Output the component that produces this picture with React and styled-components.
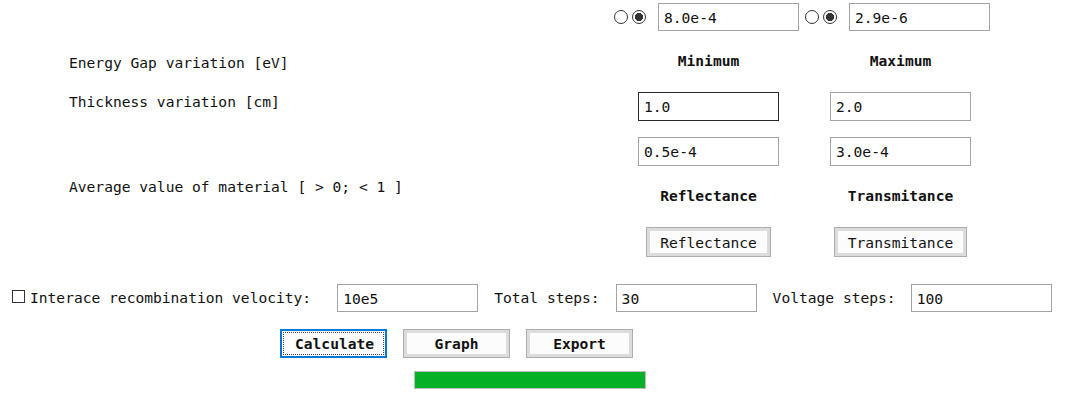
import React from "react";
import styled, { createGlobalStyle } from "styled-components";

const FONT = `"DejaVu Sans Mono", "Liberation Mono", monospace`;

const Global = createGlobalStyle`
  html, body { margin: 0; padding: 0; background: #ffffff; }
  body { font-family: ${FONT}; font-size: 14.6px; color: #000; }
`;

const Page = styled.div`
  width: 1082px;
  height: 412px;
  overflow: hidden;
  background: #ffffff;
  font-family: ${FONT};
  font-size: 14.6px;
  line-height: 17px;
  color: #111;
`;

const TopRow = styled.div`
  display: flex;
  align-items: center;
  gap: 6px;
  height: 28px;
  padding: 3px 0 0 614px;
`;

const RadioGroup = styled.div`
  display: flex;
  align-items: center;
`;

const Radio = styled.span`
  box-sizing: border-box;
  width: 14px;
  height: 14px;
  border-radius: 50%;
  border: 1px solid #333;
  margin-right: ${(p) => p.$gap}px;
  background: ${(p) =>
    p.$checked
      ? "radial-gradient(circle, #333 0 3.8px, #ffffff 4.4px)"
      : "#ffffff"};
`;

const TextBox = styled.input`
  box-sizing: border-box;
  width: 141px;
  height: ${(p) => p.$h || 28}px;
  margin: 0 0 0 ${(p) => p.$ml || 0}px;
  padding: 0 5px;
  border: 1px solid ${(p) => (p.$focused ? "#2b2b2b" : "#a3a3a3")};
  background: #ffffff;
  font-family: ${FONT};
  font-size: 14.6px;
  color: #111;
  outline: none;
  border-radius: 0;
`;

const ParamGrid = styled.div`
  display: grid;
  grid-template-columns: 638px 141px 51px 141px;
  grid-template-rows: 61px 45px 29px 61px 30px;
`;

const RowLabel = styled.div`
  grid-column: 1;
  grid-row: ${(p) => p.$row};
  align-self: start;
  margin-top: ${(p) => p.$top}px;
  padding-left: 69px;
  white-space: pre;
`;

const ColHeader = styled.div`
  grid-column: ${(p) => p.$col};
  grid-row: ${(p) => p.$row};
  align-self: start;
  margin-top: ${(p) => p.$top}px;
  text-align: center;
  font-weight: bold;
  white-space: pre;
`;

const GridCell = styled.div`
  grid-column: ${(p) => p.$col};
  grid-row: ${(p) => p.$row};
  align-self: start;
  display: flex;
  justify-content: ${(p) => (p.$center ? "center" : "flex-start")};
`;

const WinButton = styled.button`
  box-sizing: border-box;
  height: ${(p) => p.$h || 30}px;
  width: ${(p) => (p.$w ? `${p.$w}px` : "auto")};
  padding: 0 13px;
  margin: 0;
  border: 1px solid #adadad;
  box-shadow: inset 0 0 0 3px #dcdcdc;
  background: #fcfcfc;
  font-family: ${FONT};
  font-size: 14.6px;
  font-weight: ${(p) => (p.$bold ? "bold" : "normal")};
  color: #111;
  border-radius: 0;
  cursor: default;
`;

const FocusButton = styled(WinButton)`
  border: 2px solid #0078d7;
  box-shadow: none;
  background: #ffffff;
  outline: 1px dotted #444;
  outline-offset: -4px;
`;

const FieldRow = styled.div`
  display: flex;
  align-items: center;
  height: 28px;
  margin-top: 27px;
  padding-left: 12px;
`;

const CheckBox = styled.span`
  box-sizing: border-box;
  width: 13px;
  height: 13px;
  border: 1px solid #333;
  background: #ffffff;
  margin: -3px 5px 0 0;
`;

const FieldLabel = styled.span`
  margin-left: ${(p) => p.$ml || 0}px;
  margin-top: -2px;
  white-space: pre;
`;

const ActionRow = styled.div`
  display: flex;
  gap: 16px;
  margin-top: 17px;
  padding-left: 280px;
`;

const Progress = styled.div`
  box-sizing: border-box;
  width: 232px;
  height: 18px;
  margin: 13px 0 0 414px;
  border: 1px solid #bcbcbc;
  background: #e6e6e6;
`;

const ProgressFill = styled.div`
  height: 100%;
  background: #06b025;
`;

export default function App() {
  const progress = 100;
  return (
    <Page>
      <Global />
      <TopRow>
        <RadioGroup>
          <Radio $gap={4} />
          <Radio $gap={12} $checked />
          <TextBox defaultValue="8.0e-4" />
        </RadioGroup>
        <RadioGroup>
          <Radio $gap={4} />
          <Radio $gap={12} $checked />
          <TextBox defaultValue="2.9e-6" />
        </RadioGroup>
      </TopRow>

      <ParamGrid>
        <RowLabel $row={1} $top={23}>Energy Gap variation [eV]</RowLabel>
        <ColHeader $col={2} $row={1} $top={21}>Minimum</ColHeader>
        <ColHeader $col={4} $row={1} $top={21}>Maximum</ColHeader>

        <RowLabel $row={2} $top={1}>Thickness variation [cm]</RowLabel>
        <GridCell $col={2} $row={2}>
          <TextBox $h={29} $focused defaultValue="1.0" />
        </GridCell>
        <GridCell $col={4} $row={2}>
          <TextBox $h={29} defaultValue="2.0" />
        </GridCell>

        <GridCell $col={2} $row={3}>
          <TextBox $h={29} defaultValue="0.5e-4" />
        </GridCell>
        <GridCell $col={4} $row={3}>
          <TextBox $h={29} defaultValue="3.0e-4" />
        </GridCell>

        <RowLabel $row={4} $top={12}>Average value of material [ &gt; 0; &lt; 1 ]</RowLabel>
        <ColHeader $col={2} $row={4} $top={21}>Reflectance</ColHeader>
        <ColHeader $col={4} $row={4} $top={21}>Transmitance</ColHeader>

        <GridCell $col={2} $row={5} $center>
          <WinButton>Reflectance</WinButton>
        </GridCell>
        <GridCell $col={4} $row={5} $center>
          <WinButton>Transmitance</WinButton>
        </GridCell>
      </ParamGrid>

      <FieldRow>
        <CheckBox />
        <FieldLabel>Interace recombination velocity:</FieldLabel>
        <TextBox $ml={26} defaultValue="10e5" />
        <FieldLabel $ml={16}>Total steps:</FieldLabel>
        <TextBox $ml={16} defaultValue="30" />
        <FieldLabel $ml={16}>Voltage steps:</FieldLabel>
        <TextBox $ml={15} defaultValue="100" />
      </FieldRow>

      <ActionRow>
        <FocusButton $w={107} $h={29} $bold>Calculate</FocusButton>
        <WinButton $w={107} $h={29} $bold>Graph</WinButton>
        <WinButton $w={107} $h={29} $bold>Export</WinButton>
      </ActionRow>

      <Progress>
        <ProgressFill style={{ width: `${progress}%` }} />
      </Progress>
    </Page>
  );
}
